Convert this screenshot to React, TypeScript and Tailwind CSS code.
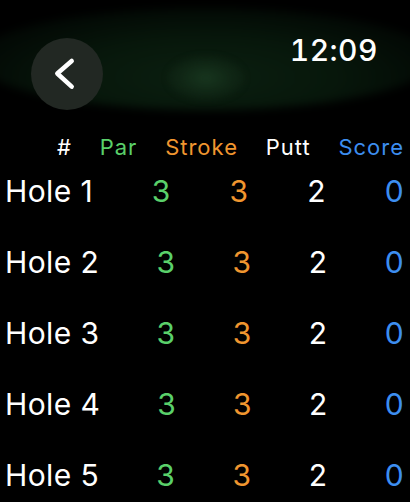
const holes = [1, 2, 3, 4, 5].map(n => ({ hole: n, par: 3, stroke: 3, putt: 2, score: 0 }))

export default function App() {
  return (
    <div className="relative h-[502px] w-[410px] overflow-hidden bg-black text-white font-['Inter','Liberation_Sans',sans-serif]">
      {/* green glow behind the header */}
      <div className="pointer-events-none absolute left-[-25px] top-[8px] h-[102px] w-[460px] rounded-[50%] bg-[radial-gradient(ellipse_at_50%_68%,#0b1f10_0%,#07170b_40%,#030a05_70%,transparent_100%)] blur-[4px]" />
      <div className="pointer-events-none absolute left-[168px] top-[56px] h-[44px] w-[76px] rounded-[50%] bg-[radial-gradient(ellipse_at_center,#18361f_0%,#12291799_55%,transparent_100%)] blur-[3px]" />

      <div className="relative">
        {/* top bar */}
        <div className="flex items-start justify-between pl-[31px] pr-[32px] pt-[38px]">
          <button className="h-[72px] w-[72px] rounded-full bg-[#222823]">
            <svg width="72" height="72" viewBox="0 0 72 72" fill="none">
              <polyline points="40.7,23 26.3,35.5 40.7,48.7" stroke="white" strokeWidth="4.5" strokeLinecap="round" strokeLinejoin="round" />
            </svg>
          </button>
          <span className="-mt-[6px] text-[30px] font-medium leading-[36px] tracking-[0.5px] tabular-nums">12:09</span>
        </div>

        {/* column headings */}
        <div className="mt-[24px] flex justify-between pl-[57px] pr-[6px] text-[22px] leading-[26px] tracking-[1px]">
          <span>#</span>
          <span className="text-[#5ad06a]">Par</span>
          <span className="text-[#f0962f]">Stroke</span>
          <span>Putt</span>
          <span className="text-[#3d8ef0]">Score</span>
        </div>

        {/* holes */}
        <div className="-mt-[5px]">
          {holes.map(h => (
            <div key={h.hole} className="flex h-[71px] items-center justify-between pl-[5px] pr-[6px] text-[30px] leading-[36px] tracking-[0.4px]">
              <span>Hole {h.hole}</span>
              <span className="text-[#5ad06a]">{h.par}</span>
              <span className="text-[#f0962f]">{h.stroke}</span>
              <span>{h.putt}</span>
              <span className="text-[#3d8ef0]">{h.score}</span>
            </div>
          ))}
        </div>
      </div>
    </div>
  )
}
